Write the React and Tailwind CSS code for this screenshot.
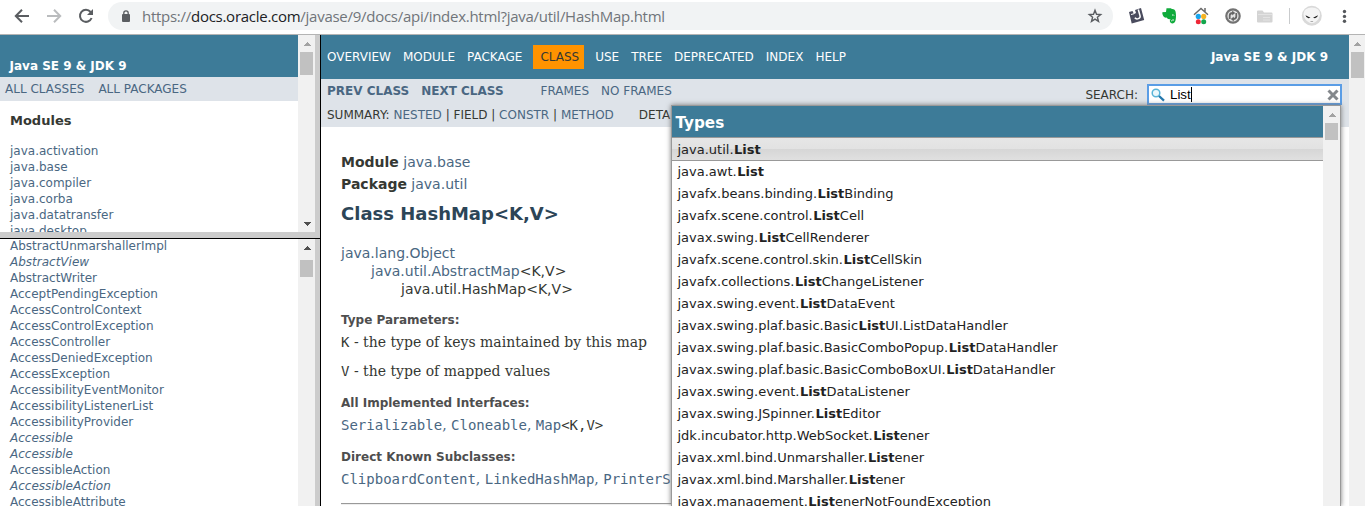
import React from "react";

function Arrow({ down, light }) {
  return (
    <svg width="8" height="5" viewBox="0 0 8 5" className="shrink-0" shapeRendering="crispEdges">
      <path d={down ? "M0 0h8L4 4z" : "M0 4h8L4 0z"} fill={light ? "#a3a3a3" : "#505050"} />
    </svg>
  );
}

function Mark({ text }) {
  const [a, b, c] = text.split("*");
  return (
    <>
      {a}
      <b className="ml-[0.5px]">{b}</b>
      {c}
    </>
  );
}

const modules = ["java.activation", "java.base", "java.compiler", "java.corba", "java.datatransfer", "java.desktop"];

const classes = [
  ["AbstractUnmarshallerImpl"],
  ["AbstractView", 1],
  ["AbstractWriter"],
  ["AcceptPendingException"],
  ["AccessControlContext"],
  ["AccessControlException"],
  ["AccessController"],
  ["AccessDeniedException"],
  ["AccessException"],
  ["AccessibilityEventMonitor"],
  ["AccessibilityListenerList"],
  ["AccessibilityProvider"],
  ["Accessible", 1],
  ["Accessible", 1],
  ["AccessibleAction"],
  ["AccessibleAction", 1],
  ["AccessibleAttribute"],
];

const results = [
  "java.awt.*List*",
  "javafx.beans.binding.*List*Binding",
  "javafx.scene.control.*List*Cell",
  "javax.swing.*List*CellRenderer",
  "javafx.scene.control.skin.*List*CellSkin",
  "javafx.collections.*List*ChangeListener",
  "javax.swing.event.*List*DataEvent",
  "javax.swing.plaf.basic.Basic*List*UI.ListDataHandler",
  "javax.swing.plaf.basic.BasicComboPopup.*List*DataHandler",
  "javax.swing.plaf.basic.BasicComboBoxUI.*List*DataHandler",
  "javax.swing.event.*List*DataListener",
  "javax.swing.JSpinner.*List*Editor",
  "jdk.incubator.http.WebSocket.*List*ener",
  "javax.xml.bind.Unmarshaller.*List*ener",
  "javax.xml.bind.Marshaller.*List*ener",
  "javax.management.*List*enerNotFoundException",
];

function Toolbar() {
  return (
    <header className="flex h-[35px] shrink-0 items-start border-b border-[#b4b4b4] bg-white">
      <svg width="108" height="32" viewBox="0 0 108 32" fill="none" strokeWidth="2">
        <path d="M29 16H16M22 9.8L15.8 16l6.2 6.2" stroke="#5a5d61" />
        <path d="M47 16h13M54 9.8l6.2 6.2-6.2 6.2" stroke="#babcbe" />
        <path d="M90.600 12A6 6 0 1 0 91.600 18" stroke="#5a5d61" />
        <path d="M93 9v6h-6z" fill="#5a5d61" />
      </svg>
      <div className="mt-[2px] flex h-[28px] w-[1005px] items-center rounded-full bg-[#f1f3f4] pl-[13px] pr-[10px]">
        <svg width="10" height="12" viewBox="0 0 10 12">
          <rect x="1" y="4" width="8" height="8" rx="1" fill="#5a5d61" />
          <path d="M2.8 4.5V3a2.2 2.2 0 0 1 4.4 0v1.5" fill="none" stroke="#5a5d61" strokeWidth="1.3" />
        </svg>
        <span className="ml-[11px] grow whitespace-nowrap font-['Open_Sans',sans-serif] text-[15px] tracking-[-0.27px] text-[#70757a]">
          https://<span className="text-[#202124]">docs.oracle.com</span>/javase/9/docs/api/index.html?java/util/HashMap.html
        </span>
        <svg width="16" height="16" viewBox="0 0 16 16" fill="none" stroke="#5a5d61" strokeWidth="1.4">
          <path d="M8 2.300l1.500 4 4.200.3-3.300 2.700 1.100 4.100L8 11.100l-3.500 2.300 1.100-4.100-3.300-2.700 4.200-.3z" />
        </svg>
      </div>
      <svg width="252" height="32" viewBox="1113 0 252 32">
        <path d="M1129 12l3.500-1 1.500 3 2-1-1-3 6-2 3.200 12-12.500 3.500z" fill="#4a4c5e" />
        <path d="M1138.300 9.500l1.800 6.500c.5 2.500-3.500 4-5.300 1.800" fill="none" stroke="#fff" strokeWidth="1.500" />
        <path d="M1131 14.500l3.200-.8" fill="none" stroke="#fff" />
        <path d="M1166.500 8.300h3.500c1 0 1.500.7 2.500.8 2.600.2 3.500 2.200 3.500 6.500 0 5-.8 7.800-3.600 7.800-2.600 0-3.400-3.200-1.500-4.300-3 .9-3.800-1-4.300-1.500-2.600.6-4-2-4.300-4.300-.1-1 .2-1.300 1.300-1.300h2.400z" fill="#10ab3c" />
        <path d="M1162.300 11.700l3-.1.100-3.200" fill="none" stroke="#fff" strokeWidth=".7" />
        <path d="M1172 15.200q1.600-1 2 .4M1174 20h-1.500q-1.200.3-.8 1.300" fill="none" stroke="#fff" strokeWidth=".9" />
        <path d="M1194 14.700l7-6.200 7 6.200M1205 8v4" fill="none" stroke="#696969" strokeWidth="1.500" />
        <circle cx="1198.300" cy="16.400" r="2.600" fill="#18a5ee" />
        <circle cx="1203.700" cy="16.400" r="2.600" fill="#f5b324" />
        <circle cx="1198.300" cy="21.700" r="2.500" fill="#ee2737" />
        <circle cx="1203.700" cy="21.700" r="2.500" fill="#13a64c" />
        <circle cx="1233" cy="16" r="6.700" fill="#e5e5e5" stroke="#727272" strokeWidth="2.200" />
        <path d="M1229.700 19v-3.500q0-2.500 3.300-2.500M1236.300 13v3.500q0 2.500-3.300 2.500" fill="none" stroke="#666" strokeWidth="1.800" />
        <path d="M1232.200 10.600v4.800l3-2.400zM1233.800 21.400v-4.800l-3 2.400z" fill="#666" />
        <path d="M1257 11.500q0-1 1-1h4.500l1.500 2h7.500q1 0 1 1v8q0 1-1 1H1258q-1 0-1-1z" fill="#d4d4d4" />
        <path d="M1258 14.500h14M1263 17.500h7M1263 20h7" stroke="#e3e3e3" />
        <path d="M1289.500 8v16" stroke="#c9cbcd" />
        <circle cx="1311.800" cy="15.800" r="10" fill="#d9d9d9" />
        <path d="M1303.500 14q.5-6.500 8.300-6.500t8.300 6.500q0 5-5.500 8.500-2.800 1.500-5.600 0-5.500-3.500-5.500-8.500z" fill="#f4f4f4" />
        <path d="M1305.500 15.300l5 2.500q-3.800 1.700-5-2.500zM1318 15.300l-5 2.500q3.800 1.700 5-2.500z" fill="#191919" />
        <path d="M1310.500 21.500h2.600" stroke="#999" strokeWidth=".8" />
        <g fill="#55585c">
          <circle cx="1344.500" cy="11.500" r="1.700" />
          <circle cx="1344.500" cy="16.400" r="1.700" />
          <circle cx="1344.500" cy="21.300" r="1.700" />
        </g>
      </svg>
    </header>
  );
}

export default function App() {
  return (
    <div className="flex h-[506px] w-[1365px] flex-col overflow-hidden bg-white font-['DejaVu_Sans',sans-serif] text-[12px] text-[#353833]">
      <Toolbar />
      <div className="flex min-h-0 grow">
        <aside className="flex w-[315px] shrink-0 flex-col">
          <div className="flex h-[197px] shrink-0 overflow-hidden">
            <div className="w-[298px]">
              <div className="flex h-[42px] items-end bg-[#3d7b98] pb-[3px] pl-[9.500px] font-bold leading-[16px] text-white">Java SE 9 &amp; JDK 9</div>
              <div className="flex h-[24px] gap-[14px] bg-[#dee3e9] pl-[5px] leading-[24px] text-[#4a6782]">
                <span>ALL CLASSES</span>
                <span>ALL PACKAGES</span>
              </div>
              <div className="pl-[10px] pt-[12px] text-[13px] font-bold leading-[16px]">Modules</div>
              <div className="pl-[10px] pt-[14px] leading-[16px] text-[#4a6782]">
                {modules.map((m) => <div key={m}>{m}</div>)}
              </div>
            </div>
            <div className="flex w-[17px] flex-col items-center bg-[#f1f1f1] pb-[5px] pt-[7px]">
              <Arrow light />
              <div className="mt-[5px] h-[23px] w-[13px] bg-[#c1c1c1]" />
              <div className="grow" />
              <Arrow down />
            </div>
          </div>
          <div className="h-[6px] shrink-0 bg-[#ccc]" />
          <div className="relative z-10 -mr-[5px] h-px shrink-0 bg-black" />
          <div className="flex min-h-0 grow overflow-hidden">
            <div className="-mt-px w-[298px] pl-[10px] leading-[16px] text-[#4a6782]">
              {classes.map(([n, it], i) => <div key={i} className={it ? "italic" : ""}>{n}</div>)}
            </div>
            <div className="flex w-[17px] flex-col items-center bg-[#f1f1f1] pt-[7px]">
              <Arrow />
              <div className="mt-[9px] h-[17px] w-[13px] bg-[#c1c1c1]" />
            </div>
          </div>
        </aside>
        <div className="w-[5px] shrink-0 bg-[#ccc]" />
        <div className="w-px shrink-0 bg-black" />
        <main className="relative min-w-0 grow">
          <div className="flex h-full">
            <div className="w-[1028px] shrink-0">
              <nav className="flex h-[44px] items-center bg-[#3d7b98] pl-[6px] pr-[21px] text-white">
                <span>OVERVIEW</span>
                <span className="ml-3">MODULE</span>
                <span className="ml-3">PACKAGE</span>
                <span className="ml-[11px] bg-[#ff9300] pl-[7px] pr-[5px] leading-[24px] text-[#353833]">CLASS</span>
                <span className="ml-[11px]">USE</span>
                <span className="ml-3">TREE</span>
                <span className="ml-3">DEPRECATED</span>
                <span className="ml-3">INDEX</span>
                <span className="ml-3">HELP</span>
                <b className="ml-auto">Java SE 9 &amp; JDK 9</b>
              </nav>
              <div className="h-[48px] bg-[#dee3e9] pl-[6px] leading-[24px] text-[#4a6782]">
                <div className="flex h-[24px]">
                  <b>PREV CLASS</b>
                  <b className="ml-3">NEXT CLASS</b>
                  <span className="ml-[37px]">FRAMES</span>
                  <span className="ml-3">NO FRAMES</span>
                  <span className="ml-auto mr-[9px] mt-[4px] text-[#353833]">SEARCH:</span>
                  <div className="mr-[7px] mt-[5px] flex h-[21px] w-[195px] items-center border-2 border-[#5a9de6] bg-white pl-[2px] pr-[1px]">
                    <svg width="14" height="14" viewBox="0 0 14 14">
                      <circle cx="5" cy="5" r="3.800" fill="#eaf7fc" stroke="#58b4d8" strokeWidth="1.500" />
                      <path d="M8 8l5 4.600" stroke="#2478ad" strokeWidth="2.300" />
                    </svg>
                    <span className="ml-[5px] font-['Liberation_Sans',sans-serif] text-[13.3px] leading-[15px] text-black">List</span>
                    <i className="h-[15px] w-px bg-black" />
                    <svg width="12" height="12" viewBox="0 0 12 12" className="ml-auto">
                      <path d="M1.500 1.500l9 9M10.500 1.500l-9 9" stroke="#84888c" strokeWidth="3" />
                    </svg>
                  </div>
                </div>
                <div className="h-[24px] whitespace-pre text-[#353833]">
                  SUMMARY: <a className="text-[#4a6782]">NESTED</a> | FIELD | <a className="text-[#4a6782]">CONSTR</a> | <a className="text-[#4a6782]">METHOD</a>
                  <span className="ml-[25px]">DETA</span>
                </div>
              </div>
              <div className="pl-[20px] pr-[20px] pt-[24px] text-[14px]">
                <div className="leading-[22px]"><b>Module</b> <a className="text-[#4a6782]">java.base</a></div>
                <div className="leading-[22px]"><b>Package</b> <a className="text-[#4a6782]">java.util</a></div>
                <h1 className="pt-[8px] text-[18px] font-bold leading-[22px] text-[#2c4557]">Class HashMap&lt;K,V&gt;</h1>
                <div className="pt-[19px] leading-[18px]">
                  <div className="text-[#4a6782]">java.lang.Object</div>
                  <div className="pl-[30px]"><a className="text-[#4a6782]">java.util.AbstractMap</a>&lt;K,V&gt;</div>
                  <div className="pl-[60px]">java.util.HashMap&lt;K,V&gt;</div>
                </div>
                <div className="pt-[14px] text-[12px] font-bold leading-[16px] text-[#4e4e4e]">Type Parameters:</div>
                <div className="pt-[4px] font-['DejaVu_Serif',serif] leading-[20px]"><span className="font-['DejaVu_Sans_Mono',monospace]">K</span> - the type of keys maintained by this map</div>
                <div className="pt-[9px] font-['DejaVu_Serif',serif] leading-[20px]"><span className="font-['DejaVu_Sans_Mono',monospace]">V</span> - the type of mapped values</div>
                <div className="pt-[14px] text-[12px] font-bold leading-[16px] text-[#4e4e4e]">All Implemented Interfaces:</div>
                <div className="pt-[4px] font-['DejaVu_Sans_Mono',monospace] leading-[20px] text-[#4a6782]">Serializable<s className="font-['DejaVu_Serif',serif] no-underline">, </s>Cloneable<s className="font-['DejaVu_Serif',serif] no-underline">, </s>Map<span className="text-[#353833]">&lt;K,V&gt;</span></div>
                <div className="pt-[14px] text-[12px] font-bold leading-[16px] text-[#4e4e4e]">Direct Known Subclasses:</div>
                <div className="pt-[4px] font-['DejaVu_Sans_Mono',monospace] leading-[20px] text-[#4a6782]">ClipboardContent<s className="font-['DejaVu_Serif',serif] no-underline">, </s>LinkedHashMap<s className="font-['DejaVu_Serif',serif] no-underline">, </s>PrinterS</div>
                <div className="mt-[14px] h-[2px] border-b border-t border-b-[#eee] border-t-[#999]" />
              </div>
            </div>
            <div className="flex w-[16px] flex-col items-center bg-[#f1f1f1] pt-[7px]">
              <Arrow light />
              <div className="mt-[5px] h-[26px] w-[13px] bg-[#c1c1c1]" />
            </div>
          </div>
          <div className="absolute bottom-0 left-[350px] top-[70px] flex w-[670px] overflow-hidden border-l border-r border-t border-[#999] bg-white shadow-[0_0_5px_#777]">
            <div className="w-[651px] text-[13px] text-[#222]">
              <div className="h-[31px] bg-[#3d7b98] pl-[3.500px] text-[15.2px] font-bold leading-[34px] text-white">Types</div>
              <div className="h-[24px] border-y border-[#999] bg-[linear-gradient(#e6e6e6,#e2e2e2_50%,#d6d6d6_50%,#e0e0e0)] pl-[5.500px] leading-[24px]"><Mark text="java.util.*List*" /></div>
              {results.map((r) => <div key={r} className="h-[22px] pl-[5.500px] leading-[22px]"><Mark text={r} /></div>)}
            </div>
            <div className="flex w-[17px] flex-col items-center bg-[#f1f1f1] pt-[7px]">
              <Arrow light />
              <div className="mt-[5px] h-[17px] w-[13px] bg-[#c1c1c1]" />
            </div>
          </div>
        </main>
      </div>
    </div>
  );
}
